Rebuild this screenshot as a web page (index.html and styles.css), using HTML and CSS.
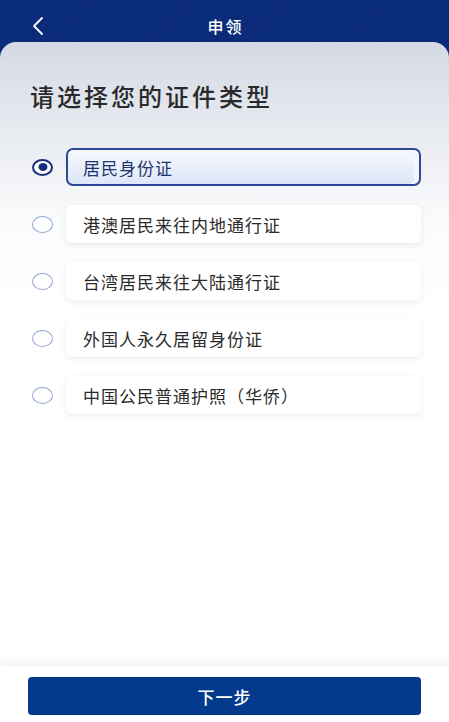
FILE: index.html
```html
<!DOCTYPE html>
<html lang="zh">
<head>
<meta charset="utf-8">
<link rel="stylesheet" href="styles.css">
</head>
<body>
<div class="app">
  <header class="topbar">
    <span class="back">
      <svg width="14" height="20" viewBox="0 0 14 20"><path d="M11 2 L3 10 L11 18" fill="none" stroke="#fff" stroke-width="1.8" stroke-linecap="round" stroke-linejoin="round"/></svg>
    </span>
    <span class="title">申领</span>
  </header>
  <main class="card">
    <h1 class="heading">请选择您的证件类型</h1>
    <ul class="options">
      <li class="option selected"><span class="radio"></span><span class="box">居民身份证</span></li>
      <li class="option"><span class="radio"></span><span class="box">港澳居民来往内地通行证</span></li>
      <li class="option"><span class="radio"></span><span class="box">台湾居民来往大陆通行证</span></li>
      <li class="option"><span class="radio"></span><span class="box">外国人永久居留身份证</span></li>
      <li class="option"><span class="radio"></span><span class="box">中国公民普通护照（华侨）</span></li>
    </ul>
  </main>
  <footer class="footer">
    <button class="next">下一步</button>
  </footer>
</div>
</body>
</html>
```
FILE: styles.css
```css
* { box-sizing: border-box; margin: 0; padding: 0; }
html, body { width: 449px; height: 722px; overflow: hidden; }
body {
  font-family: "Noto Sans CJK SC", "Noto Sans", sans-serif;
  background: #0a2a7a;
}
.app { display: flex; flex-direction: column; height: 722px; }
.topbar {
  height: 42px;
  flex: none;
  position: relative;
  background: repeating-linear-gradient(135deg, #0a2a78 0 3px, #0c2d7e 3px 5px);
}
.back { position: absolute; left: 31px; top: 16px; display: flex; }
.title {
  position: absolute;
  left: 0; right: 0; top: 15px;
  text-align: center;
  color: #fff;
  font-size: 16px;
  line-height: 22px;
  font-weight: 500;
  letter-spacing: 2px;
  padding-left: 2px;
}
.card {
  flex: 1;
  border-radius: 16px 16px 0 0;
  background: linear-gradient(180deg, #d3d9e4 0px, #e6e9ef 80px, #fafbfc 180px, #ffffff 260px);
  padding: 38px 28px 0 30px;
}
.heading {
  font-size: 24px;
  font-weight: 500;
  color: #2a2a2a;
  line-height: 32px;
  letter-spacing: 3px;
}
.options { list-style: none; margin-top: 36px; display: flex; flex-direction: column; gap: 19px; }
.option { display: flex; align-items: center; }
.radio {
  width: 21px; height: 17px;
  border: 1.5px solid #93a6d2;
  border-radius: 50%;
  margin-left: 2px;
  margin-right: 13px;
  flex: none;
  position: relative;
  background: #fff;
}
.box {
  flex: 1;
  height: 38px;
  display: flex;
  align-items: center;
  padding-left: 17px;
  background: #fff;
  border-radius: 6px;
  font-size: 17px;
  letter-spacing: 1px;
  color: #2b2b2b;
  box-shadow: 0 2px 6px rgba(150, 160, 185, 0.18);
}
.selected .radio { border: 2px solid #13307a; }
.selected .radio::after {
  content: "";
  position: absolute;
  left: 50%; top: 50%;
  width: 9px; height: 8px;
  transform: translate(-50%, -50%);
  border-radius: 50%;
  background: #13307a;
}
.selected .box {
  border: 2px solid #2c4897;
  border-radius: 7px;
  padding-left: 15px;
  color: #1f3570;
  background: linear-gradient(180deg, #f7f9fe 0%, #dde6f8 100%);
  box-shadow: inset -5px 0 0 #f2f5fc;
}
.footer {
  height: 56px;
  flex: none;
  background: #fff;
  padding: 11px 28px 0 28px;
  box-shadow: 0 -4px 8px rgba(0,0,0,0.06);
  position: relative;
}
.next {
  width: 393px;
  height: 38px;
  border: none;
  border-radius: 4px;
  background: #043a8b;
  color: #fff;
  font-family: inherit;
  font-size: 17px;
  font-weight: 500;
  letter-spacing: 1px;
}
```
